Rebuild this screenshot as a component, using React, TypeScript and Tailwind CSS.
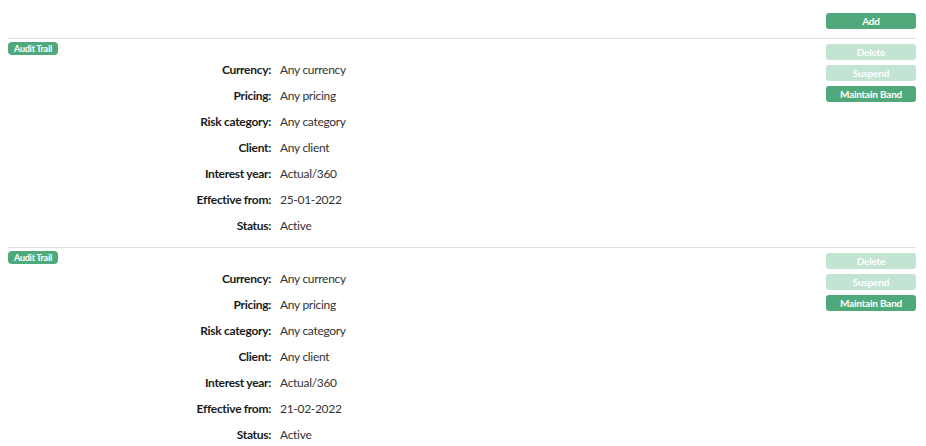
const bands = [
  { effective: "25-01-2022" },
  { effective: "21-02-2022" },
];

const fields = (effective: string) => [
  ["Currency:", "Any currency"],
  ["Pricing:", "Any pricing"],
  ["Risk category:", "Any category"],
  ["Client:", "Any client"],
  ["Interest year:", "Actual/360"],
  ["Effective from:", effective],
  ["Status:", "Active"],
];

function Btn({ label, disabled }: { label: string; disabled?: boolean }) {
  return (
    <button
      className={`w-[90px] h-4 rounded-[3px] text-[10px] leading-4 font-bold tracking-[-0.02em] text-white ${
        disabled ? "bg-[#c3e3d3]" : "bg-[#4fa97b]"
      }`}
    >
      {label}
    </button>
  );
}

export default function App() {
  return (
    <div className="min-h-screen bg-white font-['Lato',sans-serif] text-[#222]">
      <div className="ml-2 mr-[10px] pt-[13px]">
        <div className="flex justify-end mb-[9px]">
          <Btn label="Add" />
        </div>

        {bands.map((b, i) => (
          <div key={i} className="border-t border-[#e0e0e0] flex">
            <div className="flex-1 flex flex-col">
              <div className="w-[50px] mt-[3px] h-[13px] rounded-[4px] bg-[#4fa97b] text-white text-[9px] leading-[13px] font-bold tracking-[-0.03em] text-center">
                Audit Trail
              </div>
              <div className="mt-[2px] pb-[8px]">
                {fields(b.effective).map(([k, v]) => (
                  <div key={k} className="flex items-center h-[26px] text-[12px] tracking-[-0.3px]">
                    <span className="w-[263px] text-right font-bold text-[#1a1a1a]">{k}</span>
                    <span className="ml-[9px] text-[#333]">{v}</span>
                  </div>
                ))}
              </div>
            </div>
            <div className="flex flex-col gap-[5px] pt-[5px]">
              <Btn label="Delete" disabled />
              <Btn label="Suspend" disabled />
              <Btn label="Maintain Band" />
            </div>
          </div>
        ))}
      </div>
    </div>
  );
}
